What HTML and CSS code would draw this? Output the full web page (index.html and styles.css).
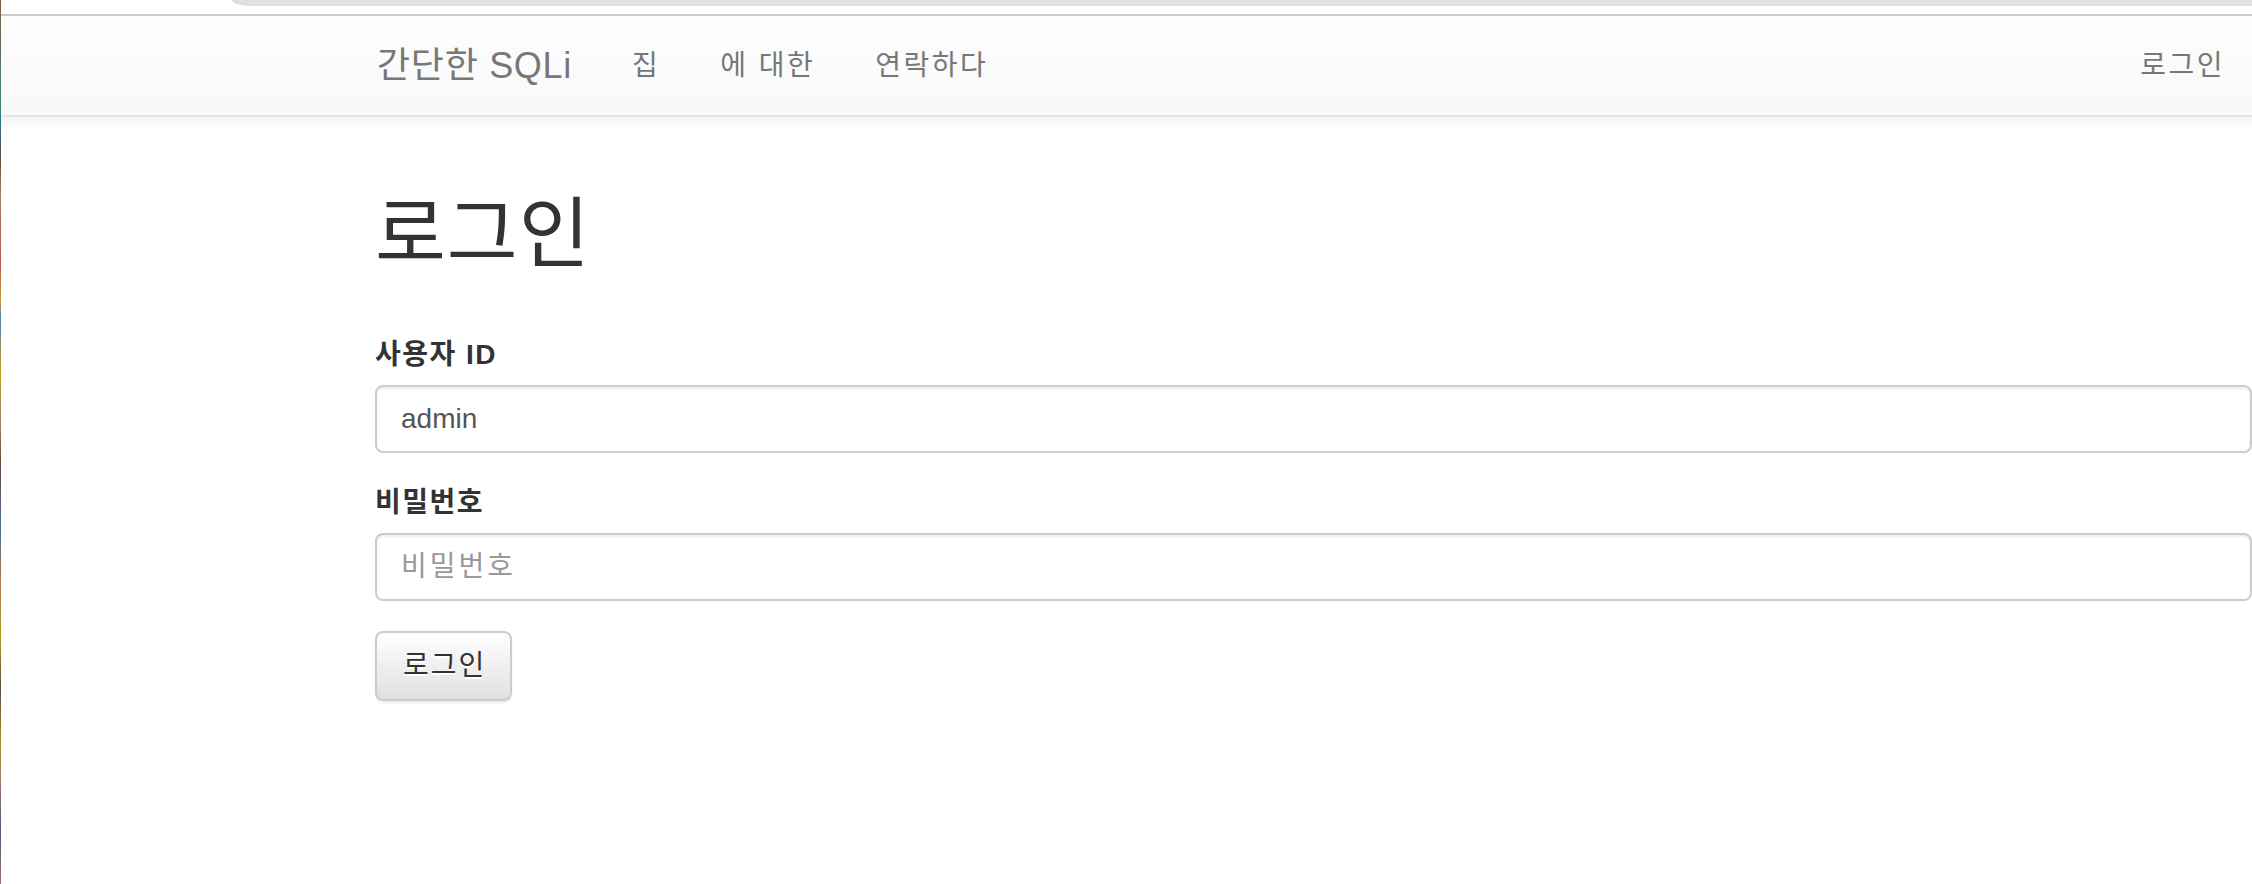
FILE: index.html
```html
<!DOCTYPE html>
<html lang="ko">
<head>
<meta charset="utf-8">
<title>로그인 - 간단한 SQLi</title>
<link rel="stylesheet" href="styles.css">
</head>
<body>
<div class="page">
  <div class="edge-strip"></div>
  <div class="main">
    <div class="top-chrome">
      <div class="chrome-bar"></div>
    </div>
    <div class="chrome-line"></div>
    <nav class="navbar">
      <a class="brand" href="#">간단한 SQLi</a>
      <a class="nav-link" href="#">집</a>
      <a class="nav-link" href="#">에 대한</a>
      <a class="nav-link" href="#">연락하다</a>
      <a class="nav-link nav-right" href="#">로그인</a>
    </nav>
    <div class="nav-shadow"></div>
    <main class="content">
      <h1 class="title">로그인</h1>
      <form class="login-form">
        <div class="form-group">
          <label class="label" for="uid">사용자 ID</label>
          <input class="field" id="uid" type="text" value="admin">
        </div>
        <div class="form-group">
          <label class="label" for="pw">비밀번호</label>
          <input class="field" id="pw" type="password" placeholder="비밀번호">
        </div>
        <button class="btn" type="button">로그인</button>
      </form>
    </main>
  </div>
</div>
</body>
</html>
```

FILE: styles.css
```css
html, body {
  margin: 0;
  padding: 0;
  background: #ffffff;
  overflow: hidden;
}

body {
  font-family: "Liberation Sans", "Noto Sans CJK KR", sans-serif;
  color: #333333;
  width: 2252px;
  height: 884px;
}

.page {
  display: flex;
  height: 884px;
}

.edge-strip {
  width: 1px;
  flex: 0 0 1px;
  background: linear-gradient(to bottom,
    #7a5a4a 0%, #3f8a6a 12%, #2e6e9a 14%, #6a4a3a 18%,
    #a07a70 22%, #b85a50 30%, #c8a030 34%, #4a80c0 36%,
    #c0a020 42%, #a08070 48%, #6a4a3a 52%, #4a6ea0 60%,
    #b07a50 66%, #b0a020 72%, #5a4a4a 78%, #b09020 84%,
    #a07a70 88%, #4a5a7a 94%, #a07070 100%);
}

.main {
  flex: 1;
  display: flex;
  flex-direction: column;
  min-width: 0;
}

.top-chrome {
  height: 14px;
  background: #ffffff;
  padding-left: 231px;
  box-sizing: border-box;
}

.chrome-bar {
  height: 6px;
  background: #e0e0e0;
  border-bottom-left-radius: 18px 6px;
}

.chrome-line {
  height: 2px;
  background: #cccccc;
}

.navbar {
  height: 99px;
  display: flex;
  align-items: center;
  padding-left: 346px;
  background: linear-gradient(to bottom, #fefefe 0%, #f8f8f8 100%);
  border-bottom: 2px solid #e4e4e4;
}

.brand {
  font-size: 36px;
  line-height: 40px;
  color: #777777;
  text-decoration: none;
  padding: 0 30px;
  letter-spacing: 0.7px;
}

.nav-link {
  font-size: 28px;
  line-height: 40px;
  color: #777777;
  text-decoration: none;
  padding: 0 30px;
  letter-spacing: 2.5px;
}

.nav-right {
  margin-left: auto;
  padding-right: 27px;
}

.nav-shadow {
  height: 12px;
  margin-bottom: -12px;
  background: linear-gradient(to bottom, rgba(0,0,0,0.045), rgba(0,0,0,0));
  position: relative;
  z-index: 1;
}

.content {
  padding-left: 374px;
  display: flex;
  flex-direction: column;
}

.title {
  font-size: 77px;
  line-height: 79px;
  font-weight: 400;
  margin: 78px 0 61px 0;
  color: #333333;
  letter-spacing: 1px;
}

.login-form {
  display: flex;
  flex-direction: column;
  align-items: flex-start;
}

.form-group {
  display: flex;
  flex-direction: column;
  width: 100%;
  margin-bottom: 30px;
}

.label {
  font-size: 28px;
  line-height: 40px;
  font-weight: bold;
  margin-bottom: 10px;
  color: #333333;
  letter-spacing: 1.5px;
}

.field {
  box-sizing: border-box;
  width: 100%;
  height: 68px;
  padding: 12px 24px;
  font-family: "Liberation Sans", "Noto Sans CJK KR", sans-serif;
  font-size: 28px;
  line-height: 40px;
  color: #555555;
  background: #ffffff;
  border: 2px solid #cccccc;
  border-radius: 8px;
  box-shadow: inset 0 2px 2px rgba(0,0,0,0.075);
  outline: none;
}

.field::placeholder {
  color: #999999;
  letter-spacing: 3px;
}

.btn {
  box-sizing: border-box;
  height: 70px;
  padding: 12px 24px 12px 26px;
  font-family: "Liberation Sans", "Noto Sans CJK KR", sans-serif;
  font-size: 28px;
  line-height: 40px;
  letter-spacing: 2px;
  color: #333333;
  background: linear-gradient(to bottom, #ffffff 0%, #e0e0e0 100%);
  border: 2px solid #cccccc;
  border-radius: 8px;
  text-shadow: 0 2px 0 #ffffff;
  box-shadow: inset 0 2px 0 rgba(255,255,255,0.15), 0 2px 2px rgba(0,0,0,0.075);
  cursor: pointer;
}
```
